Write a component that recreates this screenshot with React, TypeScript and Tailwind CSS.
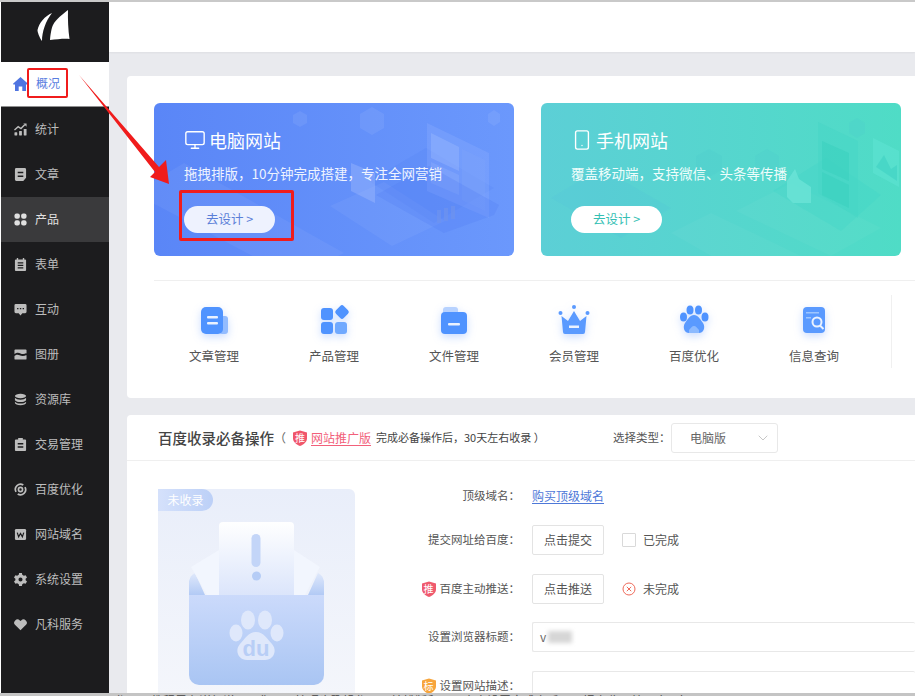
import React from 'react';
import { ChevronDown, Monitor, Smartphone } from 'lucide-react';

type IconProps = { className?: string };

const IconHome = ({ className }: IconProps) => (
    <svg viewBox="0 0 15 14" className={className} fill="currentColor">
        <path d="M7.500 0 15 6.800l-1 1.100-1-.9V14H9.300V9.500H5.700V14H2V7l-1 .9-1-1.100Z" />
    </svg>
);
const IconStats = ({ className }: IconProps) => (
    <svg viewBox="0 0 14 14" className={className} fill="currentColor">
        <rect x="0.500" y="10" width="3" height="3.500" rx="0.500" />
        <rect x="5.500" y="8.500" width="3" height="5" rx="0.500" />
        <rect x="10.500" y="6.500" width="3" height="7" rx="0.500" />
        <path d="M0.500 7.500 4.500 4l3 2 4-4" fill="none" stroke="currentColor" strokeWidth="1.500" />
        <path d="M10 0.500h3.500V4z" />
    </svg>
);
const IconDoc = ({ className }: IconProps) => (
    <svg viewBox="0 0 14 14" className={className} fill="currentColor">
        <path fillRule="evenodd" d="M2.500 0h9A1.500 1.500 0 0 1 13 1.500v9L10 14H2.500A1.500 1.500 0 0 1 1 12.500v-11A1.500 1.500 0 0 1 2.500 0ZM4 4v1.700h6V4Zm0 4v1.700h6V8Z" />
    </svg>
);
const IconGrid = ({ className }: IconProps) => (
    <svg viewBox="0 0 14 14" className={className} fill="currentColor">
        <rect x="0.500" y="0.500" width="5.800" height="5.800" rx="2.200" />
        <rect x="7.700" y="0.500" width="5.800" height="5.800" rx="2.200" />
        <rect x="0.500" y="7.700" width="5.800" height="5.800" rx="2.200" />
        <rect x="7.700" y="7.700" width="5.800" height="5.800" rx="2.200" />
    </svg>
);
const IconForm = ({ className }: IconProps) => (
    <svg viewBox="0 0 14 14" className={className} fill="currentColor">
        <path fillRule="evenodd" d="M3 0h1.500v1.500h5V0H11v1.500h1A1 1 0 0 1 13 2.500V13a1 1 0 0 1-1 1H2a1 1 0 0 1-1-1V2.500a1 1 0 0 1 1-1h1ZM4 4.500V6h6V4.500Zm0 2.800v1.400h6V7.300Zm0 2.700v1.400h6V10Z" />
    </svg>
);
const IconChat = ({ className }: IconProps) => (
    <svg viewBox="0 0 14 14" className={className} fill="currentColor">
        <path fillRule="evenodd" d="M2 1h10a1.500 1.500 0 0 1 1.500 1.500v7A1.500 1.500 0 0 1 12 11H9l-2 2.500L5 11H2A1.500 1.500 0 0 1 .5 9.500v-7A1.500 1.500 0 0 1 2 1ZM3.300 5.300v1.500h1.500V5.300Zm3 0v1.500h1.500V5.300Zm3 0v1.500h1.500V5.300Z" />
    </svg>
);
const IconAlbum = ({ className }: IconProps) => (
    <svg viewBox="0 0 14 14" className={className} fill="currentColor">
        <path fillRule="evenodd" d="M1.500 1.500h11a1 1 0 0 1 1 1v9a1 1 0 0 1-1 1h-11a1 1 0 0 1-1-1v-9a1 1 0 0 1 1-1ZM.5 6.500v2.200c2-2 3.800-1.700 5.500-.9s4.500 1.400 7.500-.3V5.500c-3 1.700-5 1-6.500.3S3 4.500.5 6.500Z" />
    </svg>
);
const IconDb = ({ className }: IconProps) => (
    <svg viewBox="0 0 14 14" className={className} fill="currentColor">
        <ellipse cx="7" cy="3.200" rx="6" ry="2.400" />
        <path d="M1 5.200c1 1.400 3.500 2 6 2s5-.6 6-2v2.600c-1 1.400-3.500 2-6 2s-5-.6-6-2Z" />
        <path d="M1 9.400c1 1.400 3.500 2 6 2s5-.6 6-2v1.400c0 1.300-2.700 2.400-6 2.400s-6-1.100-6-2.400Z" />
    </svg>
);
const IconTrade = ({ className }: IconProps) => (
    <svg viewBox="0 0 14 14" className={className} fill="currentColor">
        <path fillRule="evenodd" d="M4.500 0h5v1.500H12A1 1 0 0 1 13 2.500V13a1 1 0 0 1-1 1H2a1 1 0 0 1-1-1V2.500a1 1 0 0 1 1-1h2.500ZM4 5.500V7h6V5.500Zm0 3.500v1.500h6V9Z" />
    </svg>
);
const IconSeo = ({ className }: IconProps) => (
    <svg viewBox="0 0 14 14" className={className} fill="none" stroke="currentColor">
        <path d="M2.200 9.500A5.500 5.500 0 0 1 10 2.200" strokeWidth="1.800" />
        <path d="M11.800 4.500A5.500 5.500 0 0 1 4 11.800" strokeWidth="1.800" />
        <circle cx="7" cy="7" r="2.200" strokeWidth="1.800" />
    </svg>
);
const IconDomain = ({ className }: IconProps) => (
    <svg viewBox="0 0 14 14" className={className}>
        <rect x="1" y="1" width="12" height="12" rx="1.500" fill="currentColor" />
        <path d="M3.500 5 5 9.500 7 6l2 3.500L10.500 5" fill="none" stroke="#1c1c1e" strokeWidth="1.300" />
    </svg>
);
const IconGear = ({ className }: IconProps) => (
    <svg viewBox="0 0 14 14" className={className} fill="currentColor">
        <path fillRule="evenodd" d="M5.500 0h3l.4 2 1.700 1 1.900-.7 1.500 2.600-1.500 1.300v1.600l1.500 1.300-1.500 2.600-1.900-.7-1.700 1-.4 2h-3l-.4-2-1.700-1-1.900.7L0 9.100l1.500-1.300V6.200L0 4.900l1.500-2.600 1.900.7 1.700-1ZM7 4.800a2.200 2.200 0 1 0 0 4.400 2.200 2.200 0 0 0 0-4.400Z" />
    </svg>
);
const IconHeart = ({ className }: IconProps) => (
    <svg viewBox="0 0 14 14" className={className} fill="currentColor">
        <path d="M7 13.200 1.300 7.600a3.500 3.500 0 0 1 0-5 3.600 3.600 0 0 1 5 0l.7.700.7-.7a3.600 3.600 0 0 1 5 0 3.500 3.500 0 0 1 0 5Z" />
    </svg>
);

const navItems = [
    { label: '统计', Icon: IconStats },
    { label: '文章', Icon: IconDoc },
    { label: '产品', Icon: IconGrid, active: true },
    { label: '表单', Icon: IconForm },
    { label: '互动', Icon: IconChat },
    { label: '图册', Icon: IconAlbum },
    { label: '资源库', Icon: IconDb },
    { label: '交易管理', Icon: IconTrade },
    { label: '百度优化', Icon: IconSeo },
    { label: '网站域名', Icon: IconDomain },
    { label: '系统设置', Icon: IconGear },
    { label: '凡科服务', Icon: IconHeart },
];

const Sidebar = () => (
    <aside className="ml-px flex w-[108px] shrink-0 flex-col bg-[#1c1c1e]">
        <div className="flex h-[60px] justify-center rounded-br-md bg-[#1c1c1e] pr-[4px] pt-[6px]">
            <svg viewBox="0 0 36 36" className="h-[36px] w-[36px] text-white" fill="currentColor">
                <path d="M17 5C10 8 4 15 2.500 22c-.2 1.500 2 8 4.500 11 0-9 3.500-20 10-28Z" />
                <path d="M33 2c-5 4-12 9-15 15-1.500 3-2.500 9-3 15 7-.5 13-1.500 19.500-1-1.300-9-1.800-20-1.500-29Z" />
            </svg>
        </div>
        <div className="flex h-[45px] items-center gap-[8px] border-b border-[#8f8f8f] bg-white pl-[12px] text-[12px] text-[#5a7de0]">
            <IconHome className="h-[14px] w-[15px] text-[#4f74e0]" />
            <span className="-translate-y-px">概况</span>
        </div>
        {navItems.map(({ label, Icon, active }) => (
            <div
                key={label}
                className={`flex h-[45px] shrink-0 items-center gap-[8px] pl-[13px] text-[12px] text-[#bdbdbd] ${active ? 'bg-[#3a3a3c] text-[#e0e0e0]' : ''}`}
            >
                <Icon className="h-[13px] w-[13px]" />
                <span className="-translate-y-px">{label}</span>
            </div>
        ))}
    </aside>
);

const DesktopArt = () => (
    <svg viewBox="0 0 360 153" className="absolute inset-0 h-full w-full">
        <g fill="#ffffff" fillOpacity="0.05">
            <path d="M-20 90 30 60 190 150 140 175Z" />
            <path d="M176 103 230 79 291 118 238 143Z" />
        </g>
        <path d="M215 78 272 45 340 85 280 120Z" fill="#3f6ff0" fillOpacity="0.1" />
        <path d="M273 20 335 50 335 115 273 88Z" fill="#8db0ff" fillOpacity="0.3" />
        <path d="M277 30 305 44 305 68 277 55Z" fill="#a9c3ff" fillOpacity="0.3" />
        <path d="M308 46 331 57 331 108 308 97Z" fill="#7ea3fb" fillOpacity="0.4" />
        <path d="M277 59 305 72 305 92 277 80Z" fill="#a9c3ff" fillOpacity="0.2" />
        <path d="M197 60 221 70 221 100 197 88Z" fill="#b6cbff" fillOpacity="0.3" />
        <path d="M222 92 275 63 345 102 340 112 290 130Z" fill="#4f7cf2" fillOpacity="0.25" />
        <g fill="#6d93ee" fillOpacity="0.7">
            <rect x="283" y="107" width="4" height="13" />
            <rect x="290" y="105" width="4" height="13" />
            <rect x="297" y="103" width="4" height="13" />
        </g>
        <g fill="#ffffff" fillOpacity="0.07">
            <path d="M218 0 230 7 230 21 218 28 206 21 206 7Z" transform="translate(0 4)" />
            <path d="M146 8 153 12 153 20 146 24 139 20 139 12Z" />
            <path d="M340 0 346 4 346 12 340 16 334 12 334 4Z" transform="translate(0 7)" />
        </g>
    </svg>
);

const MobileArt = () => (
    <svg viewBox="0 0 360 153" className="absolute inset-0 h-full w-full">
        <g fill="#ffffff" fillOpacity="0.03">
            <path d="M195 108 250 80 340 125 290 153Z" />
            <path d="M130 130 170 110 260 153 200 170Z" />
        </g>
        <path d="M10 95 60 65 130 105 80 135Z" fill="#4fb9e0" fillOpacity="0.15" />
        <path d="M232 88 285 55 340 92 300 128Z" fill="#3fd5c8" fillOpacity="0.3" />
        <path d="M277 19 317 38 317 115 277 90Z" fill="#45d5c6" fillOpacity="0.5" />
        <path d="M281 38 308 50 308 78 281 66Z" fill="#38cfbe" fillOpacity="0.5" />
        <path d="M281 69 308 82 308 105 281 92Z" fill="#38cfbe" fillOpacity="0.5" />
        <path d="M332 35 358 48 358 84 332 70Z" fill="#5de2d2" fillOpacity="0.6" />
        <path d="M335 64 343 52 350 66 356 62 356 78Z" fill="#45d5c6" fillOpacity="0.8" />
        <path d="M246 78 254 66 258 76 270 84 270 100 252 100 246 94Z" fill="#6fe6d8" fillOpacity="0.7" />
        <g fill="#4cc6cf" fillOpacity="0.2">
            <path d="M195 50 208 57 208 71 195 78 182 71 182 57Z" transform="translate(-27 -4)" />
            <path d="M226 46 238 53 238 67 226 74 214 67 214 53Z" />
            <path d="M316 15 324 20 324 30 316 35 308 30 308 20Z" />
        </g>
    </svg>
);

const tools = [
    { label: '文章管理', key: 'doc' },
    { label: '产品管理', key: 'grid' },
    { label: '文件管理', key: 'folder' },
    { label: '会员管理', key: 'crown' },
    { label: '百度优化', key: 'paw' },
    { label: '信息查询', key: 'search' },
];

const ToolIcon = ({ name }: { name: string }) => (
    <svg viewBox="0 0 32 32" className="h-[32px] w-[32px] drop-shadow-[0_3px_4px_rgba(80,140,255,0.3)]">
        {name === 'doc' && (
            <>
                <rect x="21" y="12" width="9" height="18" rx="3" fill="#93bcff" />
                <rect x="3" y="3" width="22" height="27" rx="5" fill="#4f93ff" />
                <rect x="9" y="12" width="11" height="2.500" rx="1" fill="#eaf2ff" />
                <rect x="9" y="18" width="11" height="2.500" rx="1" fill="#eaf2ff" />
            </>
        )}
        {name === 'grid' && (
            <>
                <rect x="3" y="4" width="12" height="12" rx="3" fill="#4f93ff" />
                <rect x="18.500" y="2.500" width="11" height="11" rx="2.500" fill="#4f93ff" transform="rotate(45 24 8)" />
                <rect x="3" y="18" width="12" height="12" rx="3" fill="#4f93ff" />
                <rect x="17" y="18" width="12" height="12" rx="3" fill="#70a9ff" />
            </>
        )}
        {name === 'folder' && (
            <>
                <path d="M5 6a3 3 0 0 1 3-3h9a3 3 0 0 1 3 3v4H5Z" fill="#b7d2ff" />
                <rect x="3" y="8" width="26" height="22" rx="4" fill="#4f93ff" />
                <rect x="10" y="19" width="12" height="2.500" rx="1" fill="#eaf2ff" />
            </>
        )}
        {name === 'crown' && (
            <>
                <circle cx="2.500" cy="9" r="2" fill="#5a9aff" />
                <circle cx="16" cy="3" r="2" fill="#5a9aff" />
                <circle cx="29.500" cy="9" r="2" fill="#5a9aff" />
                <path d="M3.500 12 10 17l6-10 6 10 6.500-5L27 28a2 2 0 0 1-2 2H7a2 2 0 0 1-2-2Z" fill="#5a9aff" />
                <rect x="11" y="21.500" width="10" height="2.500" fill="#eaf2ff" />
            </>
        )}
        {name === 'paw' && (
            <>
                <ellipse cx="12" cy="6" rx="3.500" ry="4.500" fill="#4f93ff" />
                <ellipse cx="20.500" cy="6" rx="3.500" ry="4.500" fill="#4f93ff" />
                <ellipse cx="5.500" cy="13" rx="3.500" ry="4.500" fill="#4f93ff" />
                <ellipse cx="27" cy="13" rx="3.500" ry="4.500" fill="#4f93ff" />
                <path d="M16 11c4 0 6 4 9 8 3 5 0 10-4 10H11c-4 0-7-5-4-10 3-4 5-8 9-8Z" fill="#5a9aff" />
                <path d="M16 22c2 0 3 2 5 4v3H11v-3c2-2 3-4 5-4Z" fill="#8cbaff" />
            </>
        )}
        {name === 'search' && (
            <>
                <rect x="5" y="3" width="22" height="26" rx="4" fill="#5a9aff" />
                <rect x="8" y="8" width="13" height="1.500" fill="#9ec6ff" />
                <rect x="8" y="13" width="5" height="1.500" fill="#9ec6ff" />
                <circle cx="19" cy="18" r="4.500" fill="#5a9aff" stroke="#eaf2ff" strokeWidth="2" />
                <path d="m22 21.500 3.500 3.500" stroke="#eaf2ff" strokeWidth="2" />
            </>
        )}
    </svg>
);

const Shield = ({ color, mark }: { color: string; mark: string }) => (
    <span className="relative inline-flex h-[16px] w-[16px] shrink-0 items-center justify-center">
        <svg viewBox="0 0 16 16" className="absolute inset-0 h-full w-full">
            <path d="M1 2.500 8 .5l7 2v6c0 3.500-3.500 6-7 7.500-3.500-1.500-7-4-7-7.500Z" fill={color} />
        </svg>
        <span className="relative text-[10px] leading-none text-white">{mark}</span>
    </span>
);

const PawIllustration = () => (
    <svg viewBox="158 489 197 207" className="mx-auto block h-[207px] w-[197px]">
        <defs>
            <linearGradient id="paper" x1="0" y1="0" x2="0" y2="1">
                <stop offset="0" stopColor="#ffffff" />
                <stop offset="1" stopColor="#dbe5fb" />
            </linearGradient>
            <linearGradient id="pocket" x1="0" y1="0" x2="0" y2="1">
                <stop offset="0" stopColor="#cbdafb" />
                <stop offset="1" stopColor="#a9c5f3" />
            </linearGradient>
            <linearGradient id="flap" x1="0" y1="0" x2="0" y2="1">
                <stop offset="0" stopColor="#dfe8fb" />
                <stop offset="1" stopColor="#b2caf5" />
            </linearGradient>
        </defs>
        <path d="M189 595v-14a12 12 0 0 1 6-8l10 22Z" fill="url(#flap)" />
        <path d="M324 595v-14a12 12 0 0 0-6-8l-10 22Z" fill="url(#flap)" />
        <path d="M191 567 219 550V595H207Z" fill="#f2f6fe" />
        <path d="M320 567 294 550V595H305Z" fill="#f2f6fe" />
        <path d="M219 526a4 4 0 0 1 4-4h67a4 4 0 0 1 4 4v69h-75Z" fill="url(#paper)" />
        <rect x="251.500" y="534" width="9" height="33" rx="4.500" fill="#c3d5f8" />
        <circle cx="256.500" cy="576" r="4.500" fill="#b5ccf6" />
        <path d="M189 595H324V675a10 10 0 0 1-10 10H199a10 10 0 0 1-10-10Z" fill="url(#pocket)" />
        <g fill="#dfe8fb">
            <ellipse cx="248" cy="620" rx="7" ry="9.500" />
            <ellipse cx="265" cy="620" rx="7" ry="9.500" />
            <ellipse cx="236" cy="633" rx="6.500" ry="8.500" />
            <ellipse cx="277" cy="633" rx="6.500" ry="8.500" />
            <path d="M256 632c8 0 11 7 16 12 6 7 1 16-7 16h-18c-8 0-13-9-7-16 5-5 8-12 16-12Z" />
        </g>
        <text x="256" y="656" textAnchor="middle" fontSize="22" fontWeight="700" fill="#b8cef6" fontFamily="'Liberation Sans', sans-serif">du</text>
    </svg>
);

const Label = ({ children, icon }: { children: React.ReactNode; icon?: React.ReactNode }) => (
    <div className="flex w-[165px] shrink-0 items-center justify-end gap-[3px] text-[11.500px] text-[#555]">
        {icon}
        <span>{children}&#xFF1A;</span>
    </div>
);

const OutlineButton = ({ children }: { children: React.ReactNode }) => (
    <button className="flex h-[30px] w-[72px] items-center justify-center rounded-[2px] border border-[#e3e3e3] bg-white text-[12px] text-[#555]">
        {children}
    </button>
);

const App = () => (
    <div className="relative flex h-[696px] w-[915px] flex-col overflow-hidden bg-white font-['Noto_Sans_CJK_SC','Noto_Sans',sans-serif]">
        <div className="h-[2px] shrink-0 bg-[#c9c9c9]" />
        <div className="flex min-h-0 flex-1">
            <Sidebar />
            <main className="flex min-w-0 flex-1 flex-col bg-[#e9eaee]">
                <div className="h-[50px] shrink-0 bg-white shadow-[0_1px_2px_rgba(0,0,0,0.05)]" />
                <div className="flex flex-col gap-[17px] pl-[18px] pt-[24px]">
                    <section className="h-[322px] shrink-0 rounded-l-[4px] bg-white pl-[27px] pt-[27px]">
                        <div className="flex gap-[27px]">
                            <div className="relative h-[153px] w-[360px] overflow-hidden rounded-[6px] bg-gradient-to-r from-[#5a86f7] to-[#6b98fc] pl-[30px] pt-[24px] text-white">
                                <DesktopArt />
                                <div className="relative flex h-[26px] items-center gap-[3px]">
                                    <Monitor className="h-[22px] w-[22px]" strokeWidth={1.500} />
                                    <span className="text-[18px] leading-none">电脑网站</span>
                                </div>
                                <p className="relative mt-[10px] h-[20px] whitespace-nowrap text-[13.500px] leading-[20px] text-[#eef3ff]">拖拽排版&#xFF0C;10分钟完成搭建&#xFF0C;专注全网营销</p>
                                <button className="relative mt-[23px] flex h-[27px] w-[91px] items-center justify-center rounded-full bg-[#eef2fe] text-[12.500px] text-[#5b7fd8]">去设计 &gt;</button>
                            </div>
                            <div className="relative h-[153px] w-[360px] shrink-0 overflow-hidden rounded-[6px] bg-gradient-to-r from-[#5ccfd6] to-[#4fdcc6] pl-[30px] pt-[24px] text-white">
                                <MobileArt />
                                <div className="relative flex h-[26px] items-center gap-[3px]">
                                    <Smartphone className="h-[22px] w-[22px]" strokeWidth={1.500} />
                                    <span className="text-[18px] leading-none">手机网站</span>
                                </div>
                                <p className="relative mt-[10px] h-[20px] whitespace-nowrap text-[13.500px] leading-[20px] text-[#eefdfb]">覆盖移动端&#xFF0C;支持微信、头条等传播</p>
                                <button className="relative mt-[23px] flex h-[27px] w-[91px] items-center justify-center rounded-full bg-white text-[12.500px] text-[#35bfb4]">去设计 &gt;</button>
                            </div>
                        </div>
                        <div className="mt-[24px] flex h-[102px] border-t border-[#efefef] pt-[14px]">
                            <div className="flex h-[73px] w-[738px] border-r border-[#f0f0f0] pt-[9px]">
                                {tools.map(tool => (
                                    <div key={tool.key} className="flex w-[120px] shrink-0 flex-col items-center">
                                        <ToolIcon name={tool.key} />
                                        <span className="mt-[11px] text-[12.500px] leading-[18px] text-[#555]">{tool.label}</span>
                                    </div>
                                ))}
                            </div>
                        </div>
                    </section>
                    <section className="shrink-0 rounded-l-[4px] bg-white">
                        <div className="flex h-[46px] items-center border-b border-[#efefef] pl-[31px] text-[#444]">
                            <h2 className="w-[116px] shrink-0 whitespace-nowrap text-[14.500px] font-medium">百度收录必备操作</h2>
                            <span className="w-[18px] shrink-0 text-[12px] text-[#666]">&#xFF08;</span>
                            <Shield color="#f0566b" mark="推" />
                            <a className="ml-[3px] w-[62px] shrink-0 whitespace-nowrap text-[12px] text-[#f2607a] underline underline-offset-2">网站推广版</a>
                            <span className="ml-[3px] w-[162px] shrink-0 whitespace-nowrap text-[11px] text-[#444]">完成必备操作后&#xFF0C;30天左右收录 &#xFF09;</span>
                            <span className="ml-[75px] w-[58px] shrink-0 whitespace-nowrap text-[11.500px] text-[#555]">选择类型&#xFF1A;</span>
                            <div className="flex h-[30px] w-[107px] shrink-0 items-center justify-between rounded-[3px] border border-[#e8e8e8] pl-[18px] pr-[6px] text-[12px] text-[#666]">
                                <span>电脑版</span>
                                <ChevronDown className="h-[16px] w-[16px] text-[#aaa]" strokeWidth={1} />
                            </div>
                        </div>
                        <div className="flex pl-[31px] pt-[28px]">
                            <div className="relative h-[207px] w-[197px] shrink-0 rounded-t-[6px] bg-gradient-to-b from-[#e9eefa] to-[#f4f6fb]">
                                <PawIllustration />
                                <span className="absolute left-0 top-0 flex h-[22px] w-[55px] items-center justify-center rounded-tl-[6px] rounded-r-full bg-gradient-to-r from-[#d5e1fb] to-[#bcd0f7] text-[12px] text-white">未收录</span>
                            </div>
                            <div className="flex min-w-0 flex-1 flex-col">
                                <div className="-mt-px flex h-[16px] items-center">
                                    <Label>顶级域名</Label>
                                    <a className="ml-[12px] text-[12px] text-[#4e78d8] underline underline-offset-2">购买顶级域名</a>
                                </div>
                                <div className="mt-[21px] flex h-[30px] items-center">
                                    <Label>提交网址给百度</Label>
                                    <div className="ml-[12px]"><OutlineButton>点击提交</OutlineButton></div>
                                    <span className="ml-[18px] h-[14px] w-[14px] rounded-[1px] border border-[#d9d9d9]" />
                                    <span className="ml-[7px] text-[12px] text-[#555]">已完成</span>
                                </div>
                                <div className="mt-[19px] flex h-[30px] items-center">
                                    <Label icon={<Shield color="#ef5a6e" mark="推" />}>百度主动推送</Label>
                                    <div className="ml-[12px]"><OutlineButton>点击推送</OutlineButton></div>
                                    <svg viewBox="0 0 14 14" className="ml-[18px] h-[14px] w-[14px] text-[#ef6a5a]" fill="none" stroke="currentColor">
                                        <circle cx="7" cy="7" r="6" />
                                        <path d="m4.800 4.800 4.400 4.400m0-4.400-4.400 4.400" />
                                    </svg>
                                    <span className="ml-[7px] text-[12px] text-[#555]">未完成</span>
                                </div>
                                <div className="mt-[18px] flex h-[30px] items-center">
                                    <Label>设置浏览器标题</Label>
                                    <div className="ml-[12px] flex h-[30px] flex-1 items-center rounded-[2px] border border-r-0 border-[#e8e8e8] pl-[7px] text-[12px] text-[#666]">
                                        <span>v</span>
                                        <span className="ml-[2px] h-[12px] w-[24px] bg-[#d6d6d6] blur-[2px]" />
                                    </div>
                                </div>
                                <div className="mt-[19px] flex h-[30px] items-start">
                                    <div className="pt-[6px]"><Label icon={<Shield color="#f7a53c" mark="标" />}>设置网站描述</Label></div>
                                    <div className="ml-[12px] h-[60px] flex-1 rounded-[2px] border border-r-0 border-[#e8e8e8]" />
                                </div>
                            </div>
                        </div>
                    </section>
                </div>
            </main>
        </div>

        {/* screenshot annotations drawn over the page */}
        <div className="absolute left-[27px] top-[68px] h-[30px] w-[41px] rounded-[2px] border-2 border-[#f01c1c]" />
        <div className="absolute left-[179px] top-[190px] h-[51px] w-[115px] rounded-[2px] border-[3px] border-[#f01c1c]" />
        <svg viewBox="0 0 915 696" className="absolute inset-0 h-[696px] w-[915px]">
            <path d="M79 75 159 167 166 160 169 184 150 177 155 172Z" fill="#f01c1c" />
        </svg>
        <div className="absolute bottom-0 left-0 h-[3px] w-[915px] overflow-hidden bg-[#c4c4c4]">
            <p className="whitespace-nowrap pl-[115px] text-[12px] leading-[16px] text-[#444]">作用&#xFF0C;教程里有详细说明&#xFF0C;您可以按照步骤操作&#xFF0C;网站排版和页面内容设置完成之后&#xFF0C;再提交收录效果会更好。</p>
        </div>
    </div>
);

export default App;
